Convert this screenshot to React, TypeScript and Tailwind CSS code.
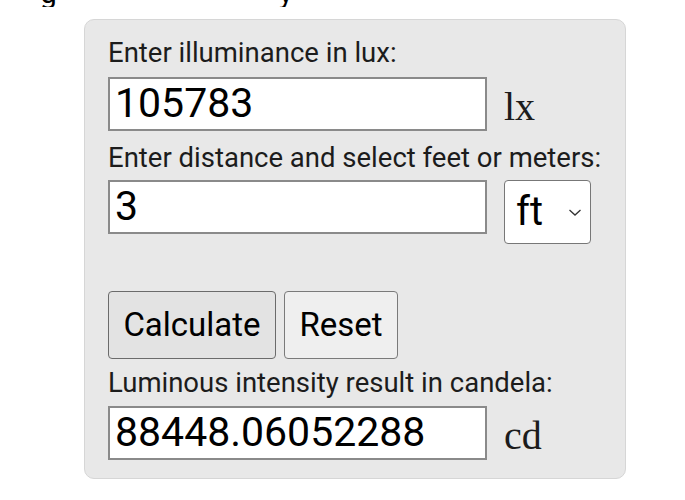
export default function App() {
  const sans = "font-['Roboto','Liberation_Sans',sans-serif]";
  const serif = "font-['Liberation_Serif','DejaVu_Serif',serif]";
  return (
    <div className={`h-[500px] w-[685px] overflow-hidden bg-white text-[#1c1c1c] ${sans}`}>
      {/* tail of previous paragraph, cut off at top */}
      <div className="relative h-[19px]">
        <div className="flex h-[7px] items-end overflow-hidden pl-[40px] text-[30px] leading-none text-black">
          <span className="-mb-[1px]">g</span>
          <span className="-mb-[1px] ml-[222px]">y</span>
        </div>
      </div>

      <div className="mx-[84px] box-border w-[542px] rounded-[10px] border border-[#d6d6d6] bg-[#e8e8e8] px-[23px] pb-[18px] pt-[18px]">
        <div className="text-[27.5px] leading-[29px]">Enter illuminance in lux:</div>
        <div className="mt-[10px] flex items-center">
          <input
            readOnly
            value="105783"
            className="box-border h-[54px] w-[379px] border-2 border-[#8a8a8a] bg-white px-[5px] text-[41px] text-black outline-none"
          />
          <span className={`ml-[17px] mt-[6px] text-[40px] leading-none ${serif}`}>lx</span>
        </div>

        <div className="mt-[12px] text-[27.5px] leading-[29px]">Enter distance and select feet or meters:</div>
        <div className="mt-[8px] flex items-start">
          <input
            readOnly
            value="3"
            className="box-border h-[54px] w-[379px] border-2 border-[#8a8a8a] bg-white px-[5px] text-[41px] text-black outline-none"
          />
          <div className="ml-[17px] box-border flex h-[64px] w-[87px] items-center rounded-[4px] border border-[#777] bg-white pl-[11px]">
            <span className="text-[40px] text-black">ft</span>
            <svg className="ml-[25px]" width="14" height="9" viewBox="0 0 14 9" fill="none">
              <path d="M1.5 2 L7 7 L12.5 2" stroke="#333" strokeWidth="1.3" />
            </svg>
          </div>
        </div>

        <div className="mt-[47px] flex gap-[8px]">
          <button className="box-border h-[68px] w-[168px] rounded-[4px] border border-[#6b6b6b] bg-[#e3e3e3] text-[33px] text-black">
            Calculate
          </button>
          <button className="box-border h-[68px] w-[114px] rounded-[4px] border border-[#7a7a7a] bg-[#efefef] text-[33px] text-black">
            Reset
          </button>
        </div>

        <div className="mt-[9px] text-[27.5px] leading-[29px]">Luminous intensity result in candela:</div>
        <div className="mt-[9px] flex items-center">
          <input
            readOnly
            value="88448.06052288"
            className="box-border h-[54px] w-[379px] border-2 border-[#8a8a8a] bg-white px-[5px] text-[41px] text-black outline-none"
          />
          <span className={`ml-[17px] mt-[6px] text-[40px] leading-none ${serif}`}>cd</span>
        </div>
      </div>
    </div>
  );
}
